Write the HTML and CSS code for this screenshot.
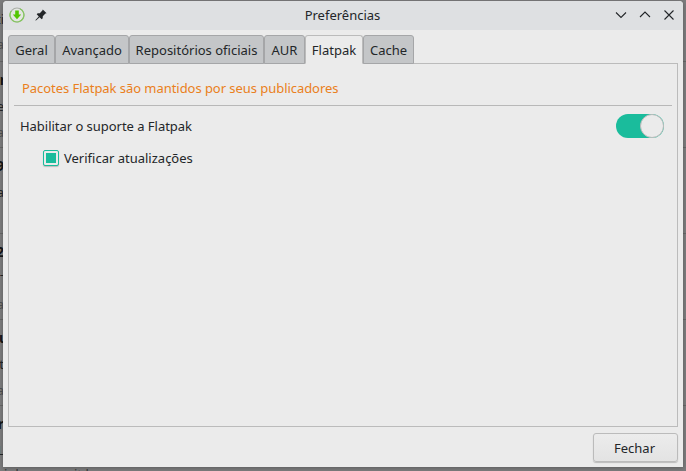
FILE: index.html
```html
<!DOCTYPE html>
<html lang="pt-BR">
<head>
<meta charset="utf-8">
<title>Preferências</title>
<link rel="stylesheet" href="styles.css">
</head>
<body>
<div class="backdrop" aria-hidden="true">
  <div class="package first"><span class="name"></span><span class="line">ti</span><span class="line dim">a</span></div>
  <div class="package"><span class="name stem">r</span><span class="line">e</span><span class="line dim">a</span></div>
  <div class="package"><span class="name">9</span><span class="line">a</span><span class="line dim"></span></div>
  <div class="package"><span class="name">2</span><span class="line dash">-</span><span class="line dim">a</span></div>
  <div class="package"><span class="name bar">u</span><span class="line">t</span><span class="line dim">a</span></div>
  <div class="package"><span class="name">r</span><span class="line">L</span></div>
</div>
<main class="window">
  <header class="titlebar">
    <div class="left-controls">
      <svg class="app-icon" viewBox="0 0 16 16"><circle cx="8" cy="8" r="7" fill="#e3e6e1" stroke="#a9aea7" stroke-width="1.1"/><path d="M11 1.7A7 7 0 1 1 2.2 4" fill="none" stroke="#83c95a" stroke-width="1.2"/><path d="M6.2 3.6h3.6v4h2.4L8 12.2 3.8 7.6h2.4z" fill="#52c600"/></svg>
      <svg class="pin" viewBox="0 0 12 12"><path d="M7.8.4l3.8 3.8-1.2.4-2.6 2.6-.1 2.1-1 1-2.1-2.1L1 11.5H.5V11l3.3-3.6-2.1-2.1 1-1 2.1-.1 2.6-2.6z" fill="#232629"/></svg>
    </div>
    <h1>Preferências</h1>
    <div class="window-controls">
      <svg viewBox="0 0 12 12"><path d="M1 3.5l5 5 5-5"/></svg>
      <svg viewBox="0 0 12 12"><path d="M1 8l5-5 5 5"/></svg>
      <svg viewBox="0 0 12 12"><path d="M1.5 1.5l9 9m0-9l-9 9"/></svg>
    </div>
  </header>
  <nav class="tabs">
    <span class="tab geral">Geral</span>
    <span class="tab avancado">Avançado</span>
    <span class="tab repos">Repositórios oficiais</span>
    <span class="tab aur">AUR</span>
    <span class="tab flatpak active">Flatpak</span>
    <span class="tab cache">Cache</span>
  </nav>
  <section class="panel">
    <p class="notice">Pacotes Flatpak são mantidos por seus publicadores</p>
    <div class="setting"><span class="setting-label">Habilitar o suporte a Flatpak</span><span class="switch"><span class="knob"></span></span></div>
    <div class="check-row"><span class="check"></span><span>Verificar atualizações</span></div>
  </section>
  <footer><button>Fechar</button></footer>
</main>
<div class="below" aria-hidden="true">i.d</div>
<div class="below second" aria-hidden="true">it.l</div>
</body>
</html>
```
FILE: styles.css
```css
* { box-sizing: border-box; }
body {
  margin: 0;
  width: 686px;
  height: 471px;
  overflow: hidden;
  position: relative;
  background: #7c7c7d;
  color: #232629;
  font: 13px/18px "Noto Sans", sans-serif;
}
.backdrop { position: absolute; inset: 0; overflow: hidden; }
.package {
  height: 86px;
  padding-top: 9px;
  border-bottom: 1px solid #666;
  display: grid;
  grid-template-rows: 26px 26px 24px;
  align-content: start;
}
.package.first { height: 62px; padding-top: 0; grid-template-rows: 10px 25px 25px; }
.package span { width: 4px; display: flex; justify-content: flex-end; white-space: nowrap; }
.package .stem { width: 6px; }
.package .bar { width: 8px; }
.package .dash { width: 5px; padding-right: 1px; line-height: 10px; }
.name { font-weight: 700; font-size: 14px; color: #151617; }
.dim { color: #4e5052; }
.window {
  position: absolute;
  left: 3px;
  top: 1px;
  width: 680px;
  height: 466px;
  background: #ebebeb;
  border-radius: 4px 4px 0 0;
  box-shadow: 0 1px 4px #0004;
  display: flex;
  flex-direction: column;
  overflow: hidden;
}
.titlebar {
  flex: none;
  height: 29px;
  padding: 0 7px 0 6px;
  background: #dee0e2;
  display: grid;
  grid-template-columns: 70px 1fr 70px;
  align-items: center;
}
h1 { margin: -2px 0 0; font: inherit; text-align: center; }
.left-controls, .window-controls { display: flex; align-items: center; margin-top: -1px; }
.app-icon { width: 16px; height: 16px; }
.pin { width: 12px; height: 12px; margin-left: 10px; }
.window-controls { justify-content: flex-end; gap: 12px; padding-right: 1px; }
.window-controls svg { width: 12px; height: 12px; fill: none; stroke: #232629; stroke-width: 1.1; }
.tabs {
  flex: none;
  display: flex;
  height: 29px;
  margin: 5px 5px -1px;
  position: relative;
}
.tab {
  border: 1px solid #a5a6a8;
  border-radius: 3px 3px 0 0;
  background: #c4c6c8;
  display: flex;
  align-items: center;
  justify-content: center;
  white-space: nowrap;
  padding-top: 1px;
}
.geral { width: 47px; }
.avancado { width: 74px; }
.repos { width: 135px; }
.aur { width: 41px; }
.flatpak { width: 58px; }
.cache { width: 51px; }
.tab.active { background: #ebebeb; border-color: #bbb; border-bottom-color: #ebebeb; }
.panel {
  height: 364px;
  flex: none;
  margin: 0 5px;
  border: 1px solid #bbb;
  padding: 5px;
}
.notice {
  margin: 0;
  height: 37px;
  padding: 10px 8px 0;
  border-bottom: 1px solid #b8b8b8;
  color: #ea7f20;
  letter-spacing: -.05px;
}
.setting {
  height: 40px;
  padding: 0 8px 0 6px;
  display: flex;
  justify-content: space-between;
  align-items: center;
}
.setting-label { letter-spacing: -.03px; }
.switch {
  width: 48px;
  height: 24px;
  border-radius: 12px;
  background: #1abc9c;
  display: flex;
  justify-content: flex-end;
}
.knob { width: 24px; height: 24px; border-radius: 50%; border: 1px solid #bbb; background: #ebebeb; }
.check-row { display: flex; align-items: center; gap: 5px; padding: 3px 0 0 29px; }
.check {
  width: 16px;
  height: 16px;
  padding: 2px;
  border: 1px solid #1abc9c;
  border-radius: 2px;
  background: #1abc9c content-box;
  box-shadow: 0 1px 1px #0003;
}
footer { padding: 6px 5px 0; display: flex; justify-content: flex-end; }
button {
  width: 85px;
  height: 29px;
  padding: 1px 2px 0 0;
  font: inherit;
  color: inherit;
  border: 1px solid #bbb;
  border-radius: 3px;
  background: linear-gradient(#ececec, #e3e3e3);
  box-shadow: 0 1px 1px #0003;
}
.below { position: absolute; left: 4px; top: 465px; color: #333; }
.below.second { left: 74px; }
```
